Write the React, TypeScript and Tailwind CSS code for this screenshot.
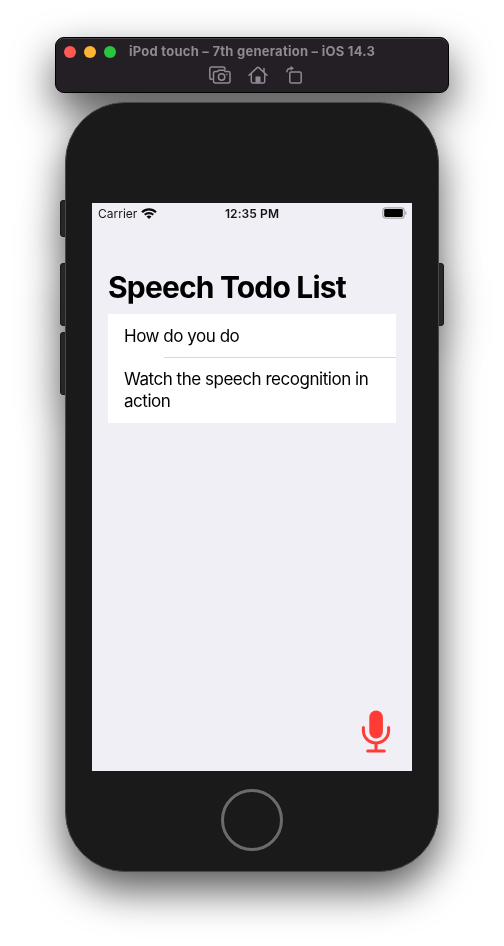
import React from "react";

function ScreenshotIcon() {
  return (
    <svg className="block h-[18px] w-[22px]" viewBox="0 0 22 18" fill="none" stroke="#8f8a92" strokeWidth="1.5" strokeLinecap="round" strokeLinejoin="round">
      <path d="M3.2 13.2H2.6Q.8 13.2.8 11.4V2.8Q.8 1 2.6 1H14.2Q16 1 16 2.8V3.2" />
      <path d="M6.3 5.6H8.6L9.6 4.2H15.2L16.2 5.6H19.2Q21 5.6 21 7.2V15.1Q21 16.9 19.2 16.9H6.3Q4.5 16.9 4.5 15.1V7.4Q4.5 5.6 6.3 5.6Z" />
      <circle cx="12.6" cy="11" r="3.2" />
      <circle cx="17.8" cy="8.3" r=".45" fill="#8f8a92" strokeWidth=".5" />
    </svg>
  );
}

function HomeIcon() {
  return (
    <svg className="block h-[18px] w-[20px]" viewBox="0 0 20 18" fill="none" stroke="#8f8a92" strokeWidth="1.5" strokeLinecap="round" strokeLinejoin="round">
      <path d="M1 9.3 9.2 1.6Q10 .9 10.8 1.6L19 9.3M16 6.2V2.6M3.3 7.6V15.6Q3.3 16.9 4.6 16.9H15.4Q16.7 16.9 16.7 15.6V7.6" />
      <path d="M7.8 16.5V10.8H12.2V16.5Z" fill="#8f8a92" strokeWidth=".6" />
    </svg>
  );
}

function RotateIcon() {
  return (
    <svg className="block h-[18px] w-[17px]" viewBox="0 0 17 18" fill="none" stroke="#8f8a92" strokeWidth="1.5" strokeLinecap="round" strokeLinejoin="round">
      <rect x="3.8" y="6.1" width="11.4" height="10.9" rx="1.5" />
      <path d="M.9 5.8Q.9 2.3 5.8 2.3" />
      <path d="M5.2.6 7.4 2.3 5.2 4Z" fill="#8f8a92" strokeWidth=".7" />
    </svg>
  );
}

function WifiIcon() {
  return (
    <svg className="block h-[11px] w-[16px]" viewBox="0 0 16 11" fill="none" stroke="#0b0b0c" strokeWidth="2.1">
      <path d="M1 4.2A10.1 10.1 0 0 1 15 4.2" />
      <path d="M3.7 6.8A6.3 6.3 0 0 1 12.3 6.8" />
      <path d="M8 11 5.5 8.6A3.6 3.6 0 0 1 10.5 8.6Z" fill="#0b0b0c" stroke="none" />
    </svg>
  );
}

function BatteryIcon() {
  return (
    <svg className="block h-[12px] w-[25px]" viewBox="0 0 25 12">
      <rect x=".8" y=".8" width="21.4" height="10.4" rx="2.8" fill="none" stroke="#a9a8ad" strokeWidth="1.2" />
      <rect x="2.2" y="2.1" width="18.6" height="7.8" rx="1.3" fill="#000" />
      <path d="M23.2 4Q24.7 4.6 24.7 6T23.2 8Z" fill="#a9a8ad" />
    </svg>
  );
}

function MicIcon() {
  return (
    <svg className="block h-[43px] w-[30px]" viewBox="0 0 30 43" fill="none" stroke="#ff3b35" strokeWidth="3" strokeLinecap="round">
      <rect x="8.3" y=".6" width="13.6" height="27.8" rx="6.8" fill="#ff3b35" stroke="none" />
      <path d="M2.4 17.5V20.8A12.6 12.2 0 0 0 27.6 20.8V17.5M15 33.5V40.6M6.7 41H23.3" />
    </svg>
  );
}

function TitleBar() {
  return (
    <header className="h-14 w-[394px] rounded-[9px] border border-black bg-[#241e25] shadow-[inset_0_1px_0_#454147]">
      <div className="flex h-[27px] items-center pl-2 pt-px">
        <div className="flex gap-2">
          <i className="size-3 rounded-full bg-[#ff5a52]" />
          <i className="size-3 rounded-full bg-[#ffb432]" />
          <i className="size-3 rounded-full bg-[#29c53f]" />
        </div>
        <h1 className="mb-[2px] ml-[13px] whitespace-nowrap text-[13px] font-bold leading-4 tracking-[0.25px] text-[#8f8a92]">
          iPod touch – 7th generation – iOS 14.3
        </h1>
      </div>
      <div className="flex pl-[153px] pt-px">
        <ScreenshotIcon />
        <div className="ml-[17px]"><HomeIcon /></div>
        <div className="ml-[18px]"><RotateIcon /></div>
      </div>
    </header>
  );
}

function StatusBar() {
  return (
    <div className="grid h-5 grid-cols-3 items-center pl-[6px] pr-[5px] text-[12px] leading-[14px] text-[#151516]">
      <div className="flex items-center gap-[4px]">
        <span className="pt-px">Carrier</span>
        <WifiIcon />
      </div>
      <span className="-ml-px pt-px text-center font-semibold tracking-[0.1px]">12:35 PM</span>
      <div className="flex justify-end"><BatteryIcon /></div>
    </div>
  );
}

function Screen() {
  return (
    <main className="mx-auto flex h-[568px] w-[320px] flex-col bg-[#f0eff6]">
      <StatusBar />
      <h2 className="ml-4 mt-[45px] whitespace-nowrap text-[30px] font-bold leading-[38px] tracking-[-0.83px] text-black">
        Speech Todo List
      </h2>
      <ul className="mx-4 mt-[8px] bg-white text-[17px] leading-[22px] tracking-[-0.47px] text-black">
        <li className="h-[43px] pl-4 pt-[11px]">How do you do</li>
        <li className="ml-14 h-px bg-[#d9d9db]" />
        <li className="h-[64.5px] whitespace-nowrap pl-4 pt-[10px]">
          Watch the speech recognition in
          <br />
          action
        </li>
      </ul>
      <div className="mb-[18px] mr-[21px] mt-auto flex justify-end"><MicIcon /></div>
    </main>
  );
}

export default function App() {
  return (
    <div className="h-[946px] w-[504px] overflow-hidden bg-white pt-[37px] font-['Inter','Liberation_Sans',sans-serif]">
      <div className="flex flex-col items-center drop-shadow-[0_18px_20px_rgba(0,0,0,0.66)]">
        <TitleBar />
        <div className="relative mt-[9px] h-[770px] w-[374px]">
          <i className="absolute -left-[5px] top-[98px] h-[37px] w-[8px] rounded-[3px] border border-[#171717] bg-[#272727]" />
          <i className="absolute -left-[5px] top-[161px] h-[63px] w-[8px] rounded-[3px] border border-[#171717] bg-[#272727]" />
          <i className="absolute -left-[5px] top-[230px] h-[63px] w-[8px] rounded-[3px] border border-[#171717] bg-[#272727]" />
          <i className="absolute -right-[5px] top-[161px] h-[63px] w-[8px] rounded-[3px] border border-[#171717] bg-[#272727]" />
          <div className="relative flex h-full w-full flex-col items-center rounded-[60px] border border-[#484848] bg-[#1a1a1a] pt-[100px]">
            <Screen />
            <div className="mt-[18px] size-[62px] rounded-full border-[3px] border-[#6b6b6b]" />
          </div>
        </div>
      </div>
    </div>
  );
}
